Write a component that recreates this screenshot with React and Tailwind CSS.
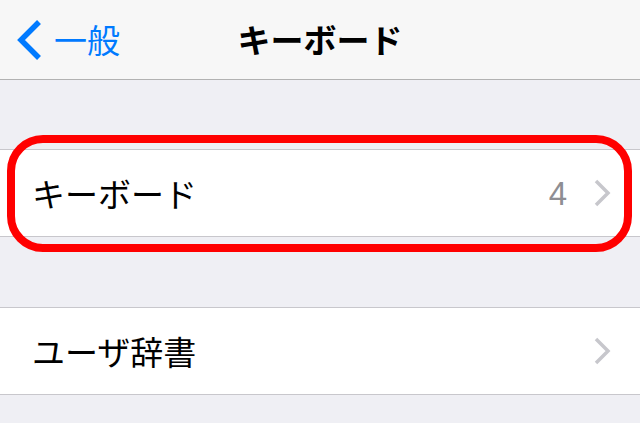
// Settings > General > Keyboard screen, with a red highlight around the first row

const font = { fontFamily: '"Noto Sans CJK JP", "Noto Sans", sans-serif' }

const Chevron = () => (
  <svg width="18" height="28" viewBox="0 0 18 28" className="shrink-0">
    <path d="M3 2 L15 14 L3 26" fill="none" stroke="#c7c7cc" strokeWidth="3.5" />
  </svg>
)

const Row = ({ label, value, highlight }) => (
  <div className="relative bg-white border-y border-[#c8c7cc]">
    <div className="h-[86px] flex items-center pl-[32px] pr-[29px]">
      <span className="flex-1 text-[33px] text-black leading-none">{label}</span>
      {value && (
        <span
          className="text-[33px] text-[#8e8e93] leading-none mr-[26px]"
          style={{ fontFamily: '"Liberation Sans", Arial, sans-serif' }}
        >
          {value}
        </span>
      )}
      <Chevron />
    </div>
    {highlight && (
      <div className="absolute left-[7px] right-[8px] top-[-15px] bottom-[-16px] border-[8px] border-[#ff0000] rounded-[36px] pointer-events-none" />
    )}
  </div>
)

export default function App() {
  return (
    <div className="w-[640px] h-[423px] bg-[#efeff4] overflow-hidden" style={font}>
      {/* Nav bar */}
      <div className="relative h-[80px] bg-[#f7f7f7] border-b border-[#b2b2b2] flex items-center">
        <div className="flex items-center pl-[15px] gap-[11px] text-[#007aff]">
          <svg width="28" height="42" viewBox="0 0 28 42">
            <path d="M24 3 L6 21 L24 39" fill="none" stroke="#007aff" strokeWidth="5.5" />
          </svg>
          <span className="text-[33px] leading-none">一般</span>
        </div>
        <div className="absolute inset-0 flex items-center justify-center pointer-events-none">
          <span className="text-[33px] font-bold text-black leading-none">キーボード</span>
        </div>
      </div>

      <div className="h-[69px]" />
      <Row label="キーボード" value="4" highlight />
      <div className="h-[70px]" />
      <Row label="ユーザ辞書" />
    </div>
  )
}
